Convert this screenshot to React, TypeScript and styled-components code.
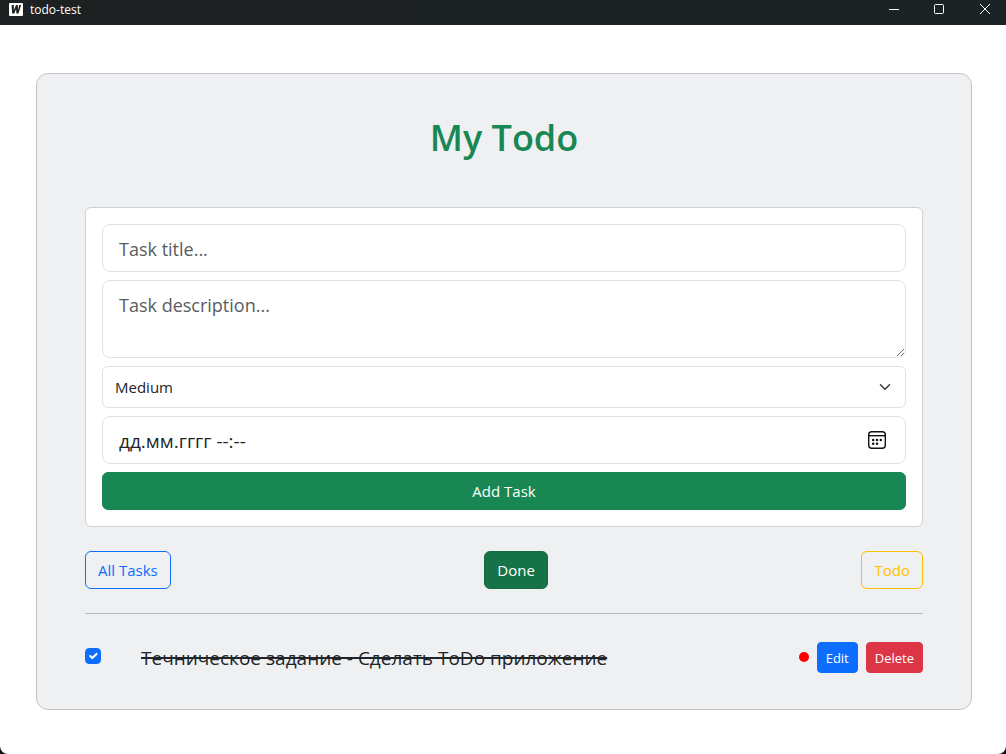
import React, { useState } from 'react';
import styled, { createGlobalStyle, css } from 'styled-components';

const GlobalStyle = createGlobalStyle`
  *, *::before, *::after { box-sizing: border-box; }
  body {
    margin: 0;
    background: #101414;
    color: #212529;
    font-family: 'Open Sans', 'Noto Sans', sans-serif;
    font-size: 15px;
    line-height: 24px;
  }
  button, input, select, textarea { font-family: inherit; margin: 0; }
`;

const Window = styled.div`
  display: flex;
  flex-direction: column;
  min-height: 100vh;
  background: #fff;
  border-radius: 0 0 8px 8px;
  overflow: hidden;
`;

const TitleBar = styled.header`
  display: flex;
  align-items: flex-start;
  justify-content: space-between;
  height: 25px;
  background: linear-gradient(90deg, #1e2121, #1b2325);
  color: #fff;
`;

const AppName = styled.div`
  display: flex;
  align-items: center;
  gap: 7px;
  height: 19px;
  padding-left: 9px;
  font-size: 12px;
  line-height: 19px;
`;

const WindowControls = styled.div`
  display: flex;
`;

const ControlButton = styled.button`
  display: grid;
  place-items: center;
  width: 45px;
  height: 18px;
  padding: 0;
  border: 0;
  background: none;
  color: #fff;
`;

const Page = styled.main`
  padding: 48px 34px 44px 36px;
`;

const Board = styled.section`
  padding: 40px 48px 36px;
  border: 1px solid #c1c3c6;
  border-radius: 12px;
  background: #eff0f2;
`;

const Heading = styled.h1`
  margin: 0 0 45px;
  color: #198754;
  font-size: 36px;
  font-weight: 600;
  line-height: 48px;
  text-align: center;
`;

const TaskForm = styled.form`
  display: flex;
  flex-direction: column;
  gap: 8px;
  padding: 16px;
  border: 1px solid #cfd0d2;
  border-radius: 6px;
  background: #fff;
`;

const field = css`
  display: block;
  width: 100%;
  border: 1px solid #dee2e6;
  background-color: #fff;
  color: #212529;
  outline: 0;
`;

const largeField = css`
  ${field}
  height: 48px;
  padding: 9px 16px 7px;
  border-radius: 8px;
  font-size: 18px;
  line-height: 30px;
`;

const TextInput = styled.input`
  ${largeField}
  &::placeholder { color: #595c5f; opacity: 1; }
`;

const TextArea = styled.textarea`
  ${largeField}
  height: 78px;
  resize: vertical;
  &::placeholder { color: #595c5f; opacity: 1; }
`;

const SelectWrap = styled.div`
  display: grid;
  align-items: center;
  & > * { grid-area: 1 / 1; }
  & > svg { justify-self: end; margin-right: 13px; pointer-events: none; }
`;

const Select = styled.select`
  ${field}
  height: 42px;
  padding: 8px 36px 8px 12px;
  border-radius: 6px;
  font-size: 15px;
  line-height: 24px;
  appearance: none;
`;

const DateField = styled.div`
  ${largeField}
  display: flex;
  align-items: center;
  padding: 0 16px;
`;

const DateInput = styled.input`
  flex: 1;
  min-width: 0;
  padding: 2px 0 0;
  border: 0;
  outline: 0;
  background: none;
  color: #212529;
  font-size: 19px;
  line-height: 30px;
  &::placeholder { color: #212529; opacity: 1; }
`;

const PickerButton = styled.button`
  display: grid;
  place-items: center;
  width: 24px;
  height: 24px;
  padding: 0;
  border: 0;
  background: none;
  color: #111;
`;

const tones = {
  success: css`border-color: #198754; background: #198754; color: #fff;`,
  active: css`border-color: #146c43; background: #157347; color: #fff;`,
  outlinePrimary: css`border-color: #0d6efd; background: transparent; color: #0d6efd;`,
  outlineWarning: css`border-color: #ffc107; background: transparent; color: #ffc107;`,
  primary: css`border-color: #0d6efd; background: #0d6efd; color: #fff;`,
  danger: css`border-color: #dc3545; background: #dc3545; color: #fff;`,
};

const Button = styled.button<{ $tone: keyof typeof tones; $small?: boolean }>`
  padding: ${p => (p.$small ? '5px 8px 3px' : '6px 12px')};
  border: 1px solid;
  border-radius: ${p => (p.$small ? '4px' : '6px')};
  font-size: ${p => (p.$small ? '13px' : '15px')};
  line-height: ${p => (p.$small ? '21px' : '24px')};
  cursor: pointer;
  ${p => tones[p.$tone]}
`;

const Filters = styled.nav`
  display: flex;
  justify-content: space-between;
  margin-top: 24px;
`;

const Divider = styled.hr`
  margin: 24px 0 28px;
  border: 0;
  border-top: 1px solid #b9bbbd;
`;

const TaskList = styled.ul`
  margin: 0;
  padding: 0;
  list-style: none;
`;

const TaskRow = styled.li`
  display: flex;
  align-items: center;
`;

const Check = styled.input`
  appearance: none;
  flex: none;
  width: 16px;
  height: 16px;
  margin: 0 40px 4px 0;
  border: 1px solid #dee2e6;
  border-radius: 4px;
  background: #fff;
  &:checked {
    border-color: #0d6efd;
    background: #0d6efd url("data:image/svg+xml,%3csvg xmlns='http://www.w3.org/2000/svg' viewBox='0 0 20 20'%3e%3cpath fill='none' stroke='%23fff' stroke-linecap='round' stroke-linejoin='round' stroke-width='3' d='m6 10 3 3 6-6'/%3e%3c/svg%3e") center / contain no-repeat;
  }
`;

const TaskText = styled.label<{ $done: boolean }>`
  flex: 1;
  font-size: 19px;
  line-height: 30px;
  text-decoration: ${p => (p.$done ? 'line-through 2px' : 'none')};
`;

const Actions = styled.div`
  display: flex;
  align-items: center;
  gap: 8px;
`;

const PriorityDot = styled.span`
  width: 10px;
  height: 10px;
  margin-bottom: 1px;
  border-radius: 50%;
  background: #f00;
`;

const AppLogo = () => (
  <svg width="14" height="13" viewBox="0 0 14 13" aria-hidden="true">
    <rect width="14" height="13" rx="1" fill="#fff" />
    <path d="M2.6 2h2.2l.1 5.2L7 2h1.8l.2 5.2L10.2 2h1.9L9.5 10.5H7.4L7.1 6 5.3 10.5H3.2z" fill="#1b1e1e" />
  </svg>
);

const CalendarIcon = () => (
  <svg width="20" height="20" viewBox="0 0 20 20" fill="none" stroke="currentColor" aria-hidden="true">
    <rect x="1.7" y="1.7" width="16.6" height="16.6" rx="3" strokeWidth="1.4" />
    <path d="M2 5.7h16" strokeWidth="1.4" />
    <g fill="currentColor" stroke="none">
      <circle cx="6.2" cy="10" r="1.25" />
      <circle cx="10" cy="10" r="1.25" />
      <circle cx="13.8" cy="10" r="1.25" />
      <circle cx="6.2" cy="13.8" r="1.25" />
      <circle cx="10" cy="13.8" r="1.25" />
    </g>
  </svg>
);

export default function App() {
  const [done, setDone] = useState(true);

  return (
    <>
      <GlobalStyle />
      <Window>
        <TitleBar>
          <AppName><AppLogo />todo-test</AppName>
          <WindowControls>
            <ControlButton aria-label="Minimize">
              <svg width="11" height="11" viewBox="0 0 11 11" stroke="currentColor"><path d="M1 5.5h10" /></svg>
            </ControlButton>
            <ControlButton aria-label="Maximize">
              <svg width="10" height="10" viewBox="0 0 10 10" fill="none" stroke="currentColor"><rect x=".5" y=".5" width="9" height="9" rx="1" /></svg>
            </ControlButton>
            <ControlButton aria-label="Close">
              <svg width="12" height="10" viewBox="0 0 12 10" stroke="currentColor"><path d="M2 0l10 10M12 0L2 10" /></svg>
            </ControlButton>
          </WindowControls>
        </TitleBar>
        <Page>
          <Board>
            <Heading>My Todo</Heading>
            <TaskForm onSubmit={e => e.preventDefault()}>
              <TextInput type="text" aria-label="Task title" placeholder="Task title..." />
              <TextArea aria-label="Task description" placeholder="Task description..." />
              <SelectWrap>
                <Select aria-label="Priority" defaultValue="Medium">
                  <option>Low</option>
                  <option>Medium</option>
                  <option>High</option>
                </Select>
                <svg width="16" height="12" viewBox="0 0 16 16" aria-hidden="true">
                  <path d="m2 5 6 6 6-6" fill="none" stroke="#343a40" strokeWidth="2" strokeLinecap="round" strokeLinejoin="round" />
                </svg>
              </SelectWrap>
              <DateField>
                <DateInput type="text" aria-label="Due date" placeholder="дд.мм.гггг --:--" />
                <PickerButton type="button" aria-label="Open calendar"><CalendarIcon /></PickerButton>
              </DateField>
              <Button type="submit" $tone="success">Add Task</Button>
            </TaskForm>
            <Filters>
              <Button $tone="outlinePrimary">All Tasks</Button>
              <Button $tone="active">Done</Button>
              <Button $tone="outlineWarning">Todo</Button>
            </Filters>
            <Divider />
            <TaskList>
              <TaskRow>
                <Check id="task-1" type="checkbox" checked={done} onChange={e => setDone(e.target.checked)} />
                <TaskText htmlFor="task-1" $done={done}>Течническое задание - Сделать ToDo приложение</TaskText>
                <Actions>
                  <PriorityDot />
                  <Button $tone="primary" $small>Edit</Button>
                  <Button $tone="danger" $small>Delete</Button>
                </Actions>
              </TaskRow>
            </TaskList>
          </Board>
        </Page>
      </Window>
    </>
  );
}
